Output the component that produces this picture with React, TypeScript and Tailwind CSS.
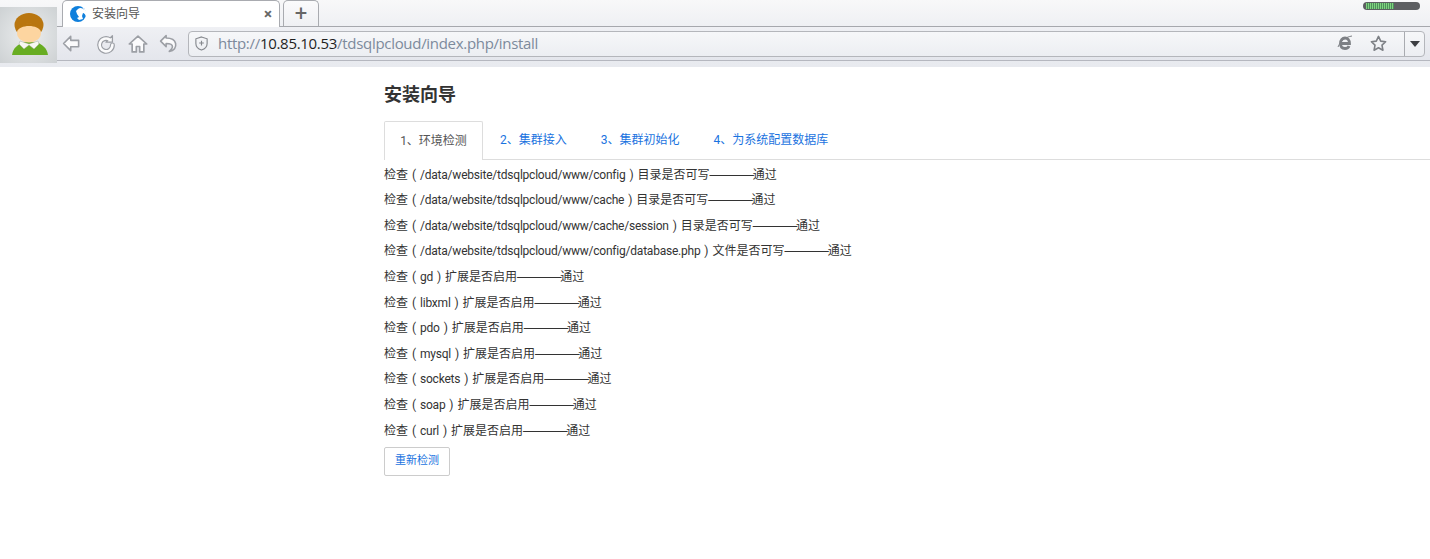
import { ReactNode } from 'react';

const checks = [
  { target: '/data/website/tdsqlpcloud/www/config', tail: '目录是否可写' },
  { target: '/data/website/tdsqlpcloud/www/cache', tail: '目录是否可写' },
  { target: '/data/website/tdsqlpcloud/www/cache/session', tail: '目录是否可写' },
  { target: '/data/website/tdsqlpcloud/www/config/database.php', tail: '文件是否可写' },
  { target: 'gd', tail: '扩展是否启用' },
  { target: 'libxml', tail: '扩展是否启用' },
  { target: 'pdo', tail: '扩展是否启用' },
  { target: 'mysql', tail: '扩展是否启用' },
  { target: 'sockets', tail: '扩展是否启用' },
  { target: 'soap', tail: '扩展是否启用' },
  { target: 'curl', tail: '扩展是否启用' },
];

const tabs = ['2、集群接入', '3、集群初始化', '4、为系统配置数据库'];

function ToolIcon({ children, className }: { children: ReactNode; className: string }) {
  return (
    <svg viewBox="0 0 24 24" className={className} fill="#fbfbfc" stroke="#9c9fa5" strokeWidth="2" strokeLinejoin="round" strokeLinecap="round">
      {children}
    </svg>
  );
}

function Avatar() {
  return (
    <div className="w-[57px] h-[56px] mt-[7px] shrink-0 bg-[radial-gradient(circle_at_center,#eceeef,#cdd1d3)]">
      <svg viewBox="0 0 57 56" className="w-[57px] h-[56px]">
        <path d="M12 48c1-7 6-11 12-13h12c6 2 11 6 12 13z" fill="#68ad22" />
        <ellipse cx="29" cy="18" rx="14.500" ry="12" fill="#b9760f" />
        <ellipse cx="29" cy="26" rx="12" ry="9.500" fill="#fdd5a0" />
        <path d="M16 25c1-6 6-9 13-9s12 3 13 9c-3-4-7-6-13-6s-10 2-13 6z" fill="#b9760f" />
        <path d="M20 34l9 3 9-3 1 3-5 5-5-4-5 4-5-5z" fill="#f7f7f2" stroke="#9aa08f" strokeWidth="0.400" />
      </svg>
    </div>
  );
}

export default function App() {
  return (
    <div className="min-h-screen bg-white font-['Roboto','Noto_Sans_CJK_SC',sans-serif] text-[12px] text-[#333]">
      <div className="flex h-[67px] bg-gradient-to-b from-[#f8f8f9] via-[#eceef2] to-[#e8eaef]">
        <Avatar />
        <div className="flex-1 flex flex-col min-w-0">
          <div className="h-[27px] shrink-0 flex items-end pl-[5px] border-b border-[#a6a8ad]">
            <div className="w-[218px] h-[27px] -mb-px bg-white border border-b-0 border-[#a9abb0] rounded-t-[5px] flex items-center pl-[7px] pr-[7px] z-10">
              <svg viewBox="0 0 16 16" className="w-[16px] h-[16px] shrink-0">
                <circle cx="8" cy="8" r="8" fill="#0f7fdc" />
                <path d="M8 3c2-2 5-1 6 1l2 4-3-1-1 3 1 3-4 1-2-2 2-1-2-3-1-3z" fill="#fff" />
                <path d="M13 1l3 4v5l-2-3z" fill="#fff" />
              </svg>
              <span className="ml-[6px] flex-1 text-[#555]">安装向导</span>
              <span className="text-[#666] text-[15px] leading-none font-bold">×</span>
            </div>
            <div className="ml-[3px] w-[36px] h-[26px] bg-gradient-to-b from-[#fbfbfc] to-[#eff0f3] border border-b-0 border-[#a9abb0] rounded-t-[5px] flex items-center justify-center text-[#666] text-[22px] leading-none">
              +
            </div>
            <div className="ml-auto mr-[10px] mb-[16px] w-[57px] h-[8px] rounded-full bg-[#5d5f62] flex items-center px-[3px]">
              <div className="w-[28px] h-[6px] bg-[repeating-linear-gradient(90deg,#7fd37f_0,#7fd37f_1px,#4d8f5a_1px,#4d8f5a_2px)]" />
            </div>
          </div>
          <div className="h-[34px] shrink-0 flex items-center border-b border-[#b5b7bf] bg-gradient-to-b from-[#eff0f4] to-[#e4e6ec]">
            <div className="flex items-center w-[131px] pl-[5px]">
              <ToolIcon className="w-[19px] h-[19px]"><path d="M11 3L2 12l9 9v-5h10V8H11z" /></ToolIcon>
              <svg viewBox="0 0 24 24" className="w-[22px] h-[22px] ml-[14px]" fill="none" strokeLinecap="round" strokeLinejoin="round">
                <path d="M19 13a7 7 0 1 1-3-5.700" stroke="#9c9fa5" strokeWidth="5.400" />
                <path d="M19 3v7h-7z" fill="#fbfbfc" stroke="#9c9fa5" strokeWidth="1.400" />
                <path d="M19 13a7 7 0 1 1-3-5.700" stroke="#fbfbfc" strokeWidth="2.900" />
              </svg>
              <ToolIcon className="w-[20px] h-[20px] ml-[11px]"><path d="M1.500 12L12 2.500 22.500 12H19v9.500h-5V15h-4v6.500H5V12z" /></ToolIcon>
              <ToolIcon className="w-[19px] h-[19px] ml-[11px]"><path d="M9 2L2 9l7 7v-4c5 0 8 1 8 4 0 2-2 4-4 6 6-1 9-5 8-10-1-5-6-7-12-7z" /></ToolIcon>
            </div>
            <div className="w-[1237px] h-[26px] bg-gradient-to-b from-[#f6f7f9] to-[#eceef2] border border-[#b4b6bb] rounded-[4px] flex items-center">
              <svg viewBox="0 0 16 16" className="w-[15px] h-[15px] ml-[5px] shrink-0" fill="none" stroke="#85888d" strokeWidth="1.200">
                <path d="M8 1l6 2v5c0 4-3 6-6 7-3-1-6-3-6-7V3z" />
                <path d="M8 5v5M5.500 7.500h5" />
              </svg>
              <div className="ml-[9px] flex-1 text-[15px] leading-none font-['Open_Sans',sans-serif] text-[#7d8a9c] tracking-[-0.3px]">
                http://<span className="text-[#1f1f1f]">10.85.10.53</span>/tdsqlpcloud/index.php/install
              </div>
              <svg viewBox="0 0 16 16" className="w-[16px] h-[16px] shrink-0 -mt-[2px]" fill="none" stroke="#7d8085">
                <path d="M3.500 8.500h9c0-3.500-2-5.500-4.500-5.500S3.500 5 3.500 8.500 5.500 13.500 8 13.500c2 0 3.500-1 4-2.500" strokeWidth="2.800" />
                <path d="M1 12c3-7 8-10 14-11" strokeWidth="1" />
              </svg>
              <svg viewBox="0 0 24 24" className="w-[19px] h-[19px] ml-[16px] shrink-0" fill="none" stroke="#7d8085" strokeWidth="2" strokeLinejoin="round">
                <path d="M12 3l2.800 6 6.200.8-4.600 4.300 1.200 6.400L12 17.400l-5.600 3.100 1.200-6.400L3 9.800 9.200 9z" />
              </svg>
              <div className="ml-[16px] w-[20px] h-full border-l border-[#a9abb0] flex items-center justify-center">
                <div className="w-0 h-0 border-x-[5px] border-x-transparent border-t-[6px] border-t-[#3c3e42]" />
              </div>
            </div>
          </div>
        </div>
      </div>

      <div className="pl-[384px]">
        <h1 className="mt-[15px] text-[18px] leading-[26px] font-bold text-[#333]">安装向导</h1>
        <div className="mt-[13px] h-[39px] flex border-b border-[#ddd]">
          <div className="w-[99px] h-[39px] bg-white border border-b-0 border-[#ddd] rounded-t-[2px] flex items-center justify-center text-[#555]">
            1、环境检测
          </div>
          {tabs.map((tab) => (
            <div key={tab} className="h-[38px] px-[17px] flex items-center text-[#1a73e0]">
              {tab}
            </div>
          ))}
        </div>
        <div className="pt-[2.7px]">
          {checks.map((item) => (
            <p key={item.target} className="h-[25.6px] leading-[25.6px] text-[#333] whitespace-pre">
              检查<span className="inline-block w-[12px] text-center">(</span><span className="tracking-[-0.22px]">{item.target}</span><span className="inline-block w-[12px] text-center">)</span>{item.tail}<span className="font-['Liberation_Sans'] tracking-[-1.2px]">————</span>通过
            </p>
          ))}
        </div>
        <button className="mt-[2.7px] w-[66px] h-[29px] bg-white border border-[#ccc] rounded-[2px] text-[#1a73e0] text-[11px]">
          重新检测
        </button>
      </div>
    </div>
  );
}
